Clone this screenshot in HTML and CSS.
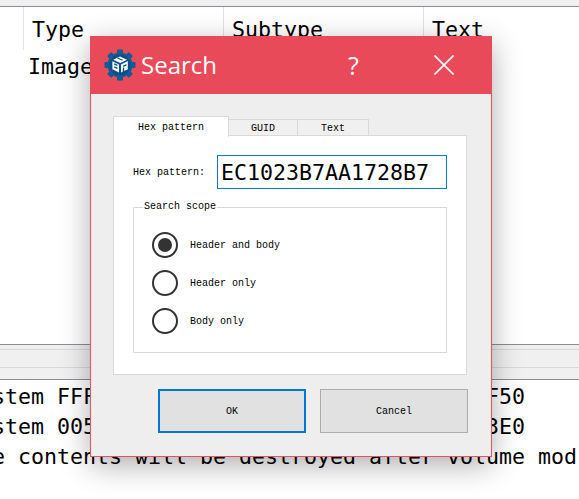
FILE: index.html
```html
<!DOCTYPE html>
<html lang="en">
<head>
  <meta charset="UTF-8" />
  <title>Search</title>
  <link rel="stylesheet" href="styles.css">
</head>
<body>
  <div class="window">
    <div class="topstrip"></div>
    <div class="tablehead">
      <div class="cell first"></div>
      <div class="cell">Type</div>
      <div class="cell">Subtype</div>
      <div class="cell last">Text</div>
    </div>
    <div class="tablerow">Image</div>
    <div class="tabband">
      <div class="tabband-inner"></div>
    </div>
    <div class="log">
      <div class="logline">stem FFFFFFFFFFFFFFFFFFFFFFFFFFFFFFFFFF50</div>
      <div class="logline">stem 0050000000000000000000000000000003E0</div>
      <div class="logline">e contents will be destroyed after volume mod</div>
    </div>
  </div>

  <div class="dialog">
    <div class="titlebar">
      <svg class="logo" width="34" height="34" viewBox="0 0 34 34">
        <g fill="#0f5c96">
          <circle cx="17" cy="17" r="12.5"/>
          <rect x="14" y="1.5" width="6" height="31" rx="1"/>
          <rect x="14" y="1.5" width="6" height="31" rx="1" transform="rotate(45 17 17)"/>
          <rect x="14" y="1.5" width="6" height="31" rx="1" transform="rotate(90 17 17)"/>
          <rect x="14" y="1.5" width="6" height="31" rx="1" transform="rotate(135 17 17)"/>
        </g>
        <circle cx="17" cy="17" r="10.5" fill="#0a4f86"/>
        <g fill="#fff">
          <path d="M17 8.5l7 3.2-6.8 3.4-7-3.3z"/>
          <path d="M9.4 13.2l6.6 3.2v8.2l-6.6-3.4z"/>
          <path d="M18 16.4l6.8-3.3v8.2L18 24.6z"/>
        </g>
        <g fill="#0a4f86">
          <rect x="11" y="16" width="3.6" height="1.2" transform="rotate(25 12.8 16.6)"/>
          <rect x="11" y="19" width="3.6" height="1.2" transform="rotate(25 12.8 19.6)"/>
          <rect x="20" y="17" width="3.6" height="1.2" transform="rotate(-25 21.8 17.6)"/>
          <rect x="19.8" y="19.5" width="1.4" height="5" />
          <path d="M14 10.4l5 2.2 1.2-.6-5-2.2z"/>
        </g>
      </svg>
      <span class="title">Search</span>
      <span class="help">?</span>
      <svg class="close" width="20" height="20" viewBox="0 0 20 20">
        <path d="M0.5 0.5L19.5 19.5M19.5 0.5L0.5 19.5" stroke="#fff" stroke-width="1.6" fill="none"/>
      </svg>
    </div>

    <div class="content">
      <div class="tabs">
        <div class="tab active">Hex pattern</div>
        <div class="tab guid">GUID</div>
        <div class="tab text">Text</div>
      </div>
      <div class="pane">
        <div class="field">
          <label class="field-label" for="hex">Hex pattern:</label>
          <input id="hex" class="hexinput" type="text" value="EC1023B7AA1728B7">
        </div>
        <fieldset class="scope">
          <legend>Search scope</legend>
          <div class="radiorow"><span class="radio on"></span>Header and body</div>
          <div class="radiorow"><span class="radio"></span>Header only</div>
          <div class="radiorow"><span class="radio"></span>Body only</div>
        </fieldset>
      </div>
      <div class="buttons">
        <button class="btn default">OK</button>
        <button class="btn">Cancel</button>
      </div>
    </div>
  </div>
</body>
</html>
```

FILE: styles.css
```css
html, body {
  margin: 0;
  padding: 0;
  height: 100%;
  overflow: hidden;
  background: #fff;
}

.window {
  font-family: 'DejaVu Sans Mono', monospace;
  font-size: 21.6px;
  color: #000;
}

.topstrip {
  height: 6px;
  background: #f0f0f0;
  border-bottom: 1px solid #8a8d93;
}

.tablehead {
  display: flex;
  height: 43px;
}

.cell {
  width: 200px;
  box-sizing: border-box;
  padding-left: 8px;
  line-height: 46px;
  border-left: 1px solid #e2e2e2;
}

.cell.first {
  width: 23px;
  padding: 0;
  border-left: none;
}

.cell.last {
  flex: 1;
}

.tablerow {
  height: 294px;
  padding-left: 28px;
  line-height: 34px;
}

.tabband {
  box-sizing: border-box;
  height: 36px;
  padding-top: 4px;
  background: #f0f0f0;
  border-top: 1px solid #8a8d93;
  border-bottom: 1px solid #8a8d93;
}

.tabband-inner {
  height: 17px;
  border-top: 1px solid #d9d9d9;
  border-bottom: 1px solid #d9d9d9;
}

.log {
  margin-left: -8px;
  padding-top: 2px;
}

.logline {
  height: 30px;
  line-height: 30px;
  white-space: pre;
}

.dialog {
  position: absolute;
  left: 90px;
  top: 36px;
  width: 402px;
  height: 421px;
  box-sizing: border-box;
  background: #eeeeee;
  border: 1px solid #e8505f;
  border-top: none;
  box-shadow: 0 8px 28px rgba(0, 0, 0, 0.32);
  font-family: 'Liberation Mono', monospace;
  font-size: 10px;
  color: #000;
}

.titlebar {
  display: flex;
  align-items: center;
  height: 58px;
  margin: 0 -1px;
  background: #e84a5a;
  color: #fff;
  font-family: 'Open Sans', sans-serif;
}

.logo {
  margin-left: 13px;
  margin-right: 4px;
}

.title {
  font-size: 24px;
  line-height: 56px;
  width: 207px;
}

.help {
  font-size: 25px;
  width: 86px;
  line-height: 56px;
}

.close {
  display: block;
}

.content {
  padding: 22px 24px 0 22px;
}

.tabs {
  display: flex;
  align-items: flex-end;
  height: 20px;
  position: relative;
  z-index: 1;
  margin-bottom: -1px;
}

.tab {
  box-sizing: border-box;
  text-align: center;
  border: 1px solid #d9d9d9;
  border-bottom: none;
}

.tab.active {
  width: 116px;
  height: 21px;
  line-height: 21px;
  background: #fff;
  margin-bottom: -1px;
}

.tab.guid, .tab.text {
  height: 17px;
  line-height: 18px;
  background: #f0f0f0;
  border-left: none;
  border-bottom: 1px solid #d9d9d9;
}

.tab.guid {
  width: 69px;
}

.tab.text {
  width: 71px;
}

.pane {
  box-sizing: border-box;
  height: 240px;
  padding: 19px 19px 0 19px;
  background: #fff;
  border: 1px solid #d9d9d9;
}

.field {
  display: flex;
  align-items: center;
  height: 34px;
}

.field-label {
  width: 84px;
}

.hexinput {
  box-sizing: border-box;
  width: 230px;
  height: 34px;
  padding: 0 3px;
  margin: 0;
  border: 1px solid #0078d7;
  outline: none;
  border-radius: 0;
  font-family: 'DejaVu Sans Mono', monospace;
  font-size: 21.6px;
  color: #000;
}

.scope {
  box-sizing: border-box;
  height: 154px;
  margin: 10px 0 0;
  padding: 11px 0 0 18px;
  border: 1px solid #d9d9d9;
  display: flex;
  flex-direction: column;
}

.scope legend {
  margin-left: -9px;
  padding: 2px 1px;
  line-height: 12px;
}

.radiorow {
  display: flex;
  align-items: center;
  height: 38px;
}

.radio {
  box-sizing: border-box;
  width: 26px;
  height: 26px;
  margin-right: 12px;
  border: 2px solid #333;
  border-radius: 50%;
  display: flex;
  align-items: center;
  justify-content: center;
}

.radio.on::after {
  content: '';
  width: 14px;
  height: 14px;
  border-radius: 50%;
  background: #333;
}

.buttons {
  display: flex;
  justify-content: flex-end;
  gap: 14px;
  margin-top: 14px;
  margin-right: -1px;
}

.btn {
  box-sizing: border-box;
  width: 148px;
  height: 44px;
  padding: 0;
  background: #e1e1e1;
  border: 1px solid #adadad;
  border-radius: 0;
  font-family: 'Liberation Mono', monospace;
  font-size: 10px;
  color: #000;
}

.btn.default {
  border: 2px solid #0078d7;
}
```
